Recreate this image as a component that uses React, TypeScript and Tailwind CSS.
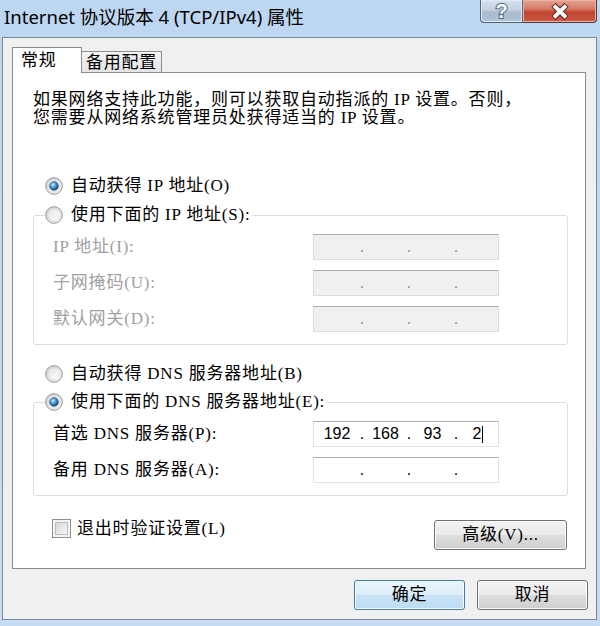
import React from 'react';

const body = "font-['Liberation_Serif','Noto_Sans_CJK_SC',serif] text-[17px] leading-[18px] tracking-[0.8px]";
const btn =
  'h-[30px] rounded-[3px] border flex items-center justify-center text-black shadow-[inset_0_0_0_1px_#fbfbfb]';
const grayBtn =
  'border-[#707070] bg-[linear-gradient(to_bottom,#f2f2f2_0%,#ebebeb_50%,#dddddd_51%,#cfcfcf_100%)]';

function Radio({ checked }: { checked?: boolean }) {
  return (
    <svg width="18" height="18" viewBox="0 0 18 18" className="shrink-0">
      <defs>
        <linearGradient id="rg-ring" x1="0" y1="0" x2="1" y2="1">
          <stop offset="0" stopColor="#d2d2d2" />
          <stop offset="1" stopColor="#fdfdfd" />
        </linearGradient>
        <linearGradient id="rg-in" x1="0" y1="0" x2="1" y2="1">
          <stop offset="0" stopColor="#e4e4e4" />
          <stop offset="1" stopColor="#ffffff" />
        </linearGradient>
        <radialGradient id="rg-dot" cx="0.38" cy="0.35" r="0.7">
          <stop offset="0" stopColor="#d9f1ff" />
          <stop offset="0.35" stopColor="#5fb1e8" />
          <stop offset="0.8" stopColor="#1f5f98" />
          <stop offset="1" stopColor="#163f66" />
        </radialGradient>
      </defs>
      <circle cx="9" cy="9" r="8.3" fill="url(#rg-ring)" stroke="#8a8a8a" strokeWidth="0.9" />
      <circle cx="9" cy="9" r="6.2" fill="url(#rg-in)" stroke="#c9c9c9" strokeWidth="0.6" />
      {checked && <circle cx="9" cy="9" r="4.3" fill="url(#rg-dot)" stroke="#1b4870" strokeWidth="0.7" />}
    </svg>
  );
}

function IpBox({ values, disabled, cursor }: { values?: string[]; disabled?: boolean; cursor?: boolean }) {
  const widths = ['w-[46px]', 'w-[43px]', 'w-[43px]', 'w-[40px]'];
  return (
    <div
      className={`w-[186px] h-[26px] shrink-0 flex items-center border font-['Liberation_Sans',sans-serif] text-[16px] tracking-normal ${
        disabled
          ? 'bg-[#f0f0f0] border-[#dcdcdc] border-t-[#ababab] text-[#8a8a8a]'
          : 'bg-white border-[#e2e3ea] border-t-[#abadb3] text-black'
      }`}
    >
      {widths.map((w, i) => (
        <React.Fragment key={i}>
          <span className={`${w} flex items-center justify-center`}>
            {values?.[i] ?? ''}
            {cursor && i === 3 && <span className="inline-block w-px h-[17px] bg-black ml-px" />}
          </span>
          {i < 3 && <span className="w-[4px] flex justify-center">.</span>}
        </React.Fragment>
      ))}
    </div>
  );
}

function Field({ label, disabled, values, cursor, first }: { label: string; disabled?: boolean; values?: string[]; cursor?: boolean; first?: boolean }) {
  return (
    <div className={`flex items-center h-[26px] ${first ? 'mt-[9px]' : 'mt-[10px]'}`}>
      <div className={`w-[279px] pl-[19px] ${disabled ? 'text-[#a0a0a0]' : 'text-black'}`}>{label}</div>
      <IpBox values={values} disabled={disabled} cursor={cursor} />
    </div>
  );
}

function RadioRow({ label, checked }: { label: string; checked?: boolean }) {
  return (
    <div className="flex items-center gap-[8px] h-[20px]">
      <Radio checked={checked} />
      <span>{label}</span>
    </div>
  );
}

export default function App() {
  return (
    <div className={`w-[600px] h-[626px] overflow-hidden flex flex-col bg-[linear-gradient(to_bottom,#bdd6f1,#c6dcf4)] text-black ${body}`}>
      {/* title bar */}
      <div className="h-[37px] shrink-0 flex items-start justify-between">
        <div className="pl-[4px] pt-[4px] text-[18.5px] leading-[26px] tracking-normal font-['Noto_Sans','Noto_Sans_CJK_SC',sans-serif]">
          Internet 协议版本 4 (TCP/IPv4) 属性
        </div>
        <div className="flex mr-[3px]">
          <div className="w-[43px] h-[23px] border border-t-0 border-[#56667a] rounded-bl-[4px] bg-[linear-gradient(to_bottom,#d6e1ee_0%,#c3d1e1_45%,#a9bbd0_55%,#b3c4d7_100%)] shadow-[inset_0_0_0_1px_#e2eaf4] flex items-center justify-center">
            <svg width="16" height="20" viewBox="0 0 16 20">
              <text
                x="8"
                y="17"
                textAnchor="middle"
                fontSize="20"
                fontWeight="bold"
                fontFamily="Liberation Sans, sans-serif"
                fill="#ffffff"
                stroke="#55657a"
                strokeWidth="2"
                paintOrder="stroke"
              >
                ?
              </text>
            </svg>
          </div>
          <div className="w-[74px] h-[23px] border border-t-0 border-l-0 border-[#4f3a3a] rounded-br-[4px] bg-[linear-gradient(to_bottom,#e3a595_0%,#d77a66_40%,#c2442f_55%,#cd5a44_100%)] shadow-[inset_0_0_0_1px_#eab1a4] flex items-center justify-center">
            <svg width="20" height="17" viewBox="0 0 20 17">
              <path d="M3.5 2 L16.5 15 M16.5 2 L3.5 15" stroke="#5a2c25" strokeWidth="6" strokeLinecap="butt" />
              <path d="M4 2.6 L16 14.4 M16 2.6 L4 14.4" stroke="#ffffff" strokeWidth="3.8" strokeLinecap="butt" />
            </svg>
          </div>
        </div>
      </div>

      {/* window body */}
      <div className="ml-[2px] mr-[3px] h-[583px] shrink-0 border border-[#7b8898] bg-[#f0f0f0] flex flex-col pl-[9px] pr-[10px] pt-[9px]">
        {/* tabs */}
        <div className="h-[25px] flex items-end">
          <div className="relative z-10 -mb-px h-[26px] w-[70px] border border-b-0 border-[#898c95] bg-white flex items-center pl-[8px]">
            常规
          </div>
          <div className="-ml-px h-[21px] w-[81px] border border-b-0 border-[#898c95] bg-[linear-gradient(to_bottom,#f4f4f4,#e4e4e4)] flex items-center justify-center pt-[2px]">
            备用配置
          </div>
        </div>

        {/* tab panel */}
        <div className="h-[497px] border border-[#898c95] bg-white flex flex-col">
          <div className="pl-[20px] pt-[18px]">
            <div>如果网络支持此功能，则可以获取自动指派的 IP 设置。否则，</div>
            <div>您需要从网络系统管理员处获得适当的 IP 设置。</div>
          </div>

          <div className="mt-[49px] ml-[32px]">
            <RadioRow label="自动获得 IP 地址(O)" checked />
          </div>

          <fieldset className="mt-[9px] ml-[20px] mr-[17px] border border-[#d5dfe5] rounded-[3px] pb-[12px]">
            <legend className="ml-[11px] pr-[2px]">
              <RadioRow label="使用下面的 IP 地址(S):" />
            </legend>
            <Field label="IP 地址(I):" disabled first />
            <Field label="子网掩码(U):" disabled />
            <Field label="默认网关(D):" disabled />
          </fieldset>

          <div className="mt-[19px] ml-[32px]">
            <RadioRow label="自动获得 DNS 服务器地址(B)" />
          </div>

          <fieldset className="mt-[8px] ml-[20px] mr-[17px] border border-[#d5dfe5] rounded-[3px] pb-[12px]">
            <legend className="ml-[11px] pr-[2px]">
              <RadioRow label="使用下面的 DNS 服务器地址(E):" checked />
            </legend>
            <Field label="首选 DNS 服务器(P):" values={['192', '168', '93', '2']} cursor first />
            <Field label="备用 DNS 服务器(A):" />
          </fieldset>

          <div className="mt-[23px] ml-[39px] mr-[18px] flex items-start justify-between">
            <div className="flex items-center gap-[6px]">
              <div className="w-[19px] h-[19px] border border-[#8f8f8f] bg-[#f4f4f4] p-[2px]">
                <div className="w-full h-full border border-[#bcbcbc] bg-[linear-gradient(135deg,#d6d6d6,#f7f7f7)]" />
              </div>
              <span>退出时验证设置(L)</span>
            </div>
            <div className={`mt-[1px] w-[133px] ${btn} ${grayBtn}`}>高级(V)...</div>
          </div>
        </div>

        {/* dialog buttons */}
        <div className="mt-[11px] -mr-[2px] flex justify-end gap-[12px]">
          <div className={`w-[111px] ${btn} border-[#3c7fb1] bg-[linear-gradient(to_bottom,#eaf5fd_0%,#dcedf9_50%,#c9e3f6_51%,#bcdcf3_100%)] shadow-[inset_0_0_0_1px_#d3ebfb]`}>
            确定
          </div>
          <div className={`w-[111px] ${btn} ${grayBtn}`}>取消</div>
        </div>
      </div>
    </div>
  );
}
